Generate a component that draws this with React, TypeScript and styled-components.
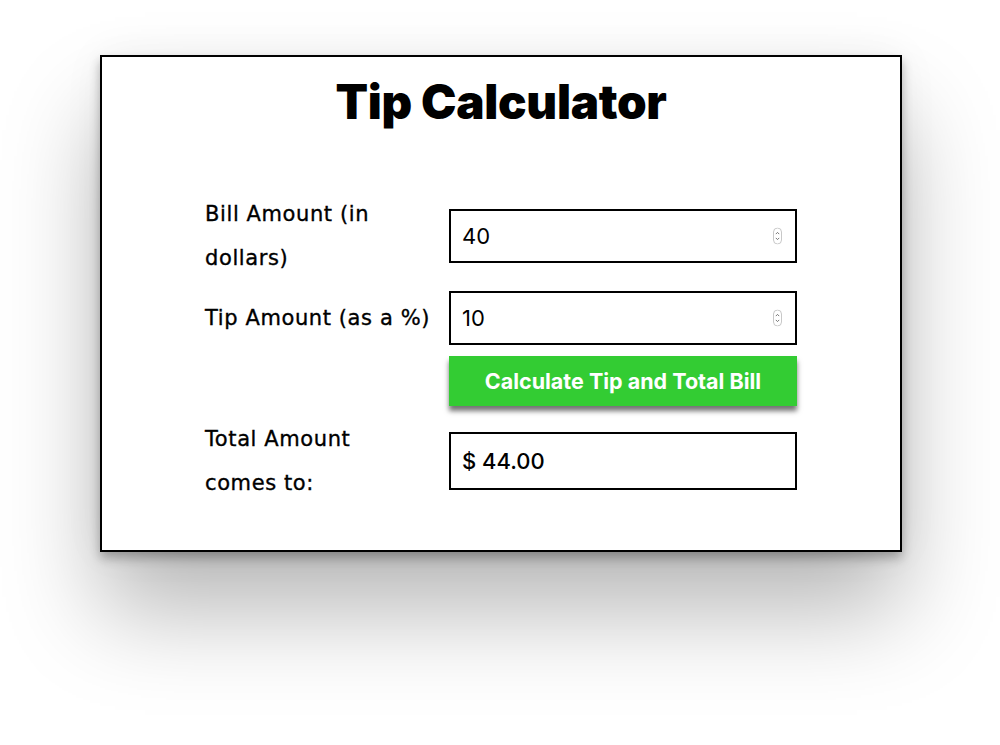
import React from "react";
import styled, { createGlobalStyle } from "styled-components";

const Global = createGlobalStyle`
  html, body { margin: 0; padding: 0; background: #ffffff; }
  body { font-family: "DejaVu Sans", "Liberation Sans", sans-serif; }
`;

const Page = styled.div`
  width: 1000px;
  height: 745px;
  overflow: hidden;
  padding-top: 55px;
  box-sizing: border-box;
`;

const Card = styled.div`
  width: 802px;
  height: 497px;
  margin-left: 100px;
  box-sizing: border-box;
  border: 2px solid #000;
  background: #fff;
  box-shadow: 0 6px 10px rgba(0, 0, 0, 0.28), 0 60px 90px rgba(0, 0, 0, 0.28),
    0 0 40px rgba(0, 0, 0, 0.05);
  display: flex;
  flex-direction: column;
  align-items: center;
`;

const Title = styled.h1`
  margin: 12px 0 0;
  font-family: "Inter", sans-serif;
  font-weight: 900;
  font-size: 47.5px;
  line-height: 66px;
  letter-spacing: -0.3px;
  color: #000;
`;

const Form = styled.div`
  margin-top: 57px;
  display: grid;
  grid-template-columns: 230px 348px;
  column-gap: 14px;
`;

const Row = styled.div`
  display: contents;
`;

const Label = styled.div<{ $mt?: number }>`
  font-family: "DejaVu Sans", sans-serif;
  font-size: 21px;
  font-weight: 400;
  letter-spacing: 0.6px;
  -webkit-text-stroke: 0.35px #000;
  line-height: 44px;
  white-space: nowrap;
  color: #000;
  align-self: center;
  margin-top: ${(p) => p.$mt ?? 0}px;
`;

const Field = styled.div<{ $mt?: number; $h: number }>`
  position: relative;
  align-self: center;
  margin-top: ${(p) => p.$mt ?? 0}px;
  height: ${(p) => p.$h}px;
  box-sizing: border-box;
  border: 2px solid #000;
  display: flex;
  align-items: center;
  padding-left: 11px;
`;

const Value = styled.span<{ $weight?: number }>`
  font-family: "Inter", sans-serif;
  font-size: 22px;
  font-weight: ${(p) => p.$weight ?? 400};
  color: #000;
`;

const Spinner = styled.svg`
  position: absolute;
  right: 13px;
  top: 50%;
  transform: translateY(-50%);
`;

const Button = styled.button`
  grid-column: 2;
  margin-top: 11px;
  height: 50px;
  border: none;
  background: #33cc33;
  color: #fff;
  font-family: "Inter", sans-serif;
  font-weight: 700;
  font-size: 21.5px;
  box-shadow: 0 5px 5px rgba(0, 0, 0, 0.55);
  padding: 0;
`;

const SpinIcon = () => (
  <Spinner width="9" height="17" viewBox="0 0 9 17">
    <rect x="0.5" y="0.5" width="8" height="16" rx="4" fill="#fff" stroke="#c8c8c8" />
    <path d="M2.8 6.6 L4.5 4.9 L6.2 6.6" fill="none" stroke="#666" strokeWidth="0.9" />
    <path d="M2.8 10.4 L4.5 12.1 L6.2 10.4" fill="none" stroke="#666" strokeWidth="0.9" />
  </Spinner>
);

export default function App() {
  return (
    <>
      <Global />
      <Page>
        <Card>
          <Title>Tip Calculator</Title>
          <Form>
            <Row>
              <Label>
                Bill Amount (in
                <br />
                dollars)
              </Label>
              <Field $h={54}>
                <Value>40</Value>
                <SpinIcon />
              </Field>
            </Row>
            <Row>
              <Label $mt={11}>Tip Amount (as a %)</Label>
              <Field $mt={11} $h={54}>
                <Value>10</Value>
                <SpinIcon />
              </Field>
            </Row>
            <Button>Calculate Tip and Total Bill</Button>
            <Row>
              <Label $mt={11}>
                Total Amount
                <br />
                comes to:
              </Label>
              <Field $mt={11} $h={58}>
                <Value $weight={500}>$ 44.00</Value>
              </Field>
            </Row>
          </Form>
        </Card>
      </Page>
    </>
  );
}
